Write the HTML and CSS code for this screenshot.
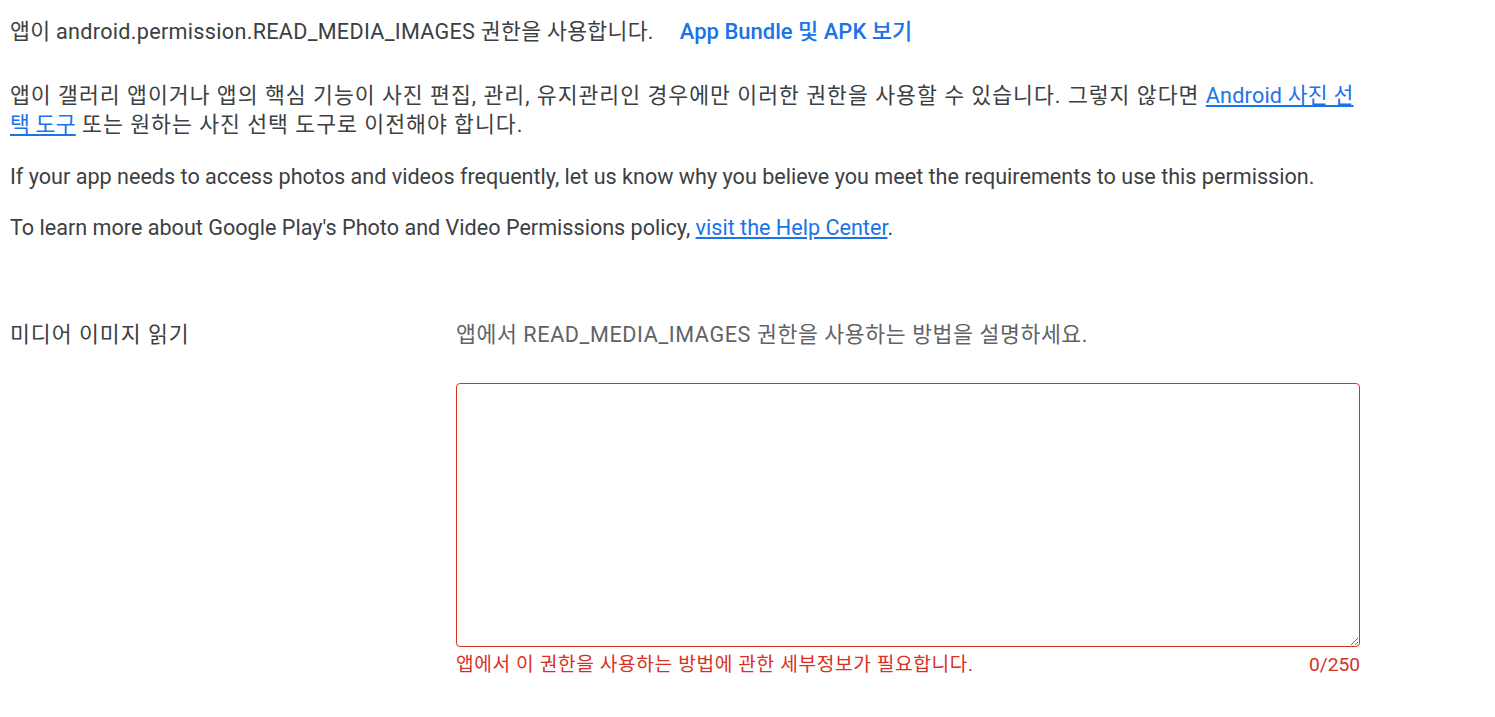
FILE: index.html
```html
<!DOCTYPE html>
<html lang="ko">
<head>
    <meta charset="UTF-8">
    <meta name="viewport" content="width=device-width, initial-scale=1.0">
    <title>권한 선언</title>
    <link rel="stylesheet" href="styles.css">
</head>
<body>
    <div class="page">
        <div class="header-row">
            <span class="permission-name">앱이 android.permission.READ_MEDIA_IMAGES 권한을 사용합니다.</span>
            <a class="bundle-link" href="#">App Bundle 및 APK 보기</a>
        </div>

        <p class="text text-first ko-wide">앱이 갤러리 앱이거나 앱의 핵심 기능이 사진 편집, 관리, 유지관리인 경우에만 이러한 권한을 사용할 수 있습니다. 그렇지 않다면 <a class="picker-link" href="#">Android 사진 선택 도구</a> 또는 원하는 사진 선택 도구로 이전해야 합니다.</p>
        <p class="text">If your app needs to access photos and videos frequently, let us know why you believe you meet the requirements to use this permission.</p>
        <p class="text">To learn more about Google Play's Photo and Video Permissions policy, <a href="#">visit the Help Center</a>.</p>

        <div class="field-row">
            <div class="field-label ko-wide">미디어 이미지 읽기</div>
            <div class="field-body">
                <div class="field-hint ko">앱에서 READ_MEDIA_IMAGES 권한을 사용하는 방법을 설명하세요.</div>
                <textarea class="field-input" maxlength="250"></textarea>
                <div class="field-footer">
                    <span class="field-error ko">앱에서 이 권한을 사용하는 방법에 관한 세부정보가 필요합니다.</span>
                    <span class="field-count">0/250</span>
                </div>
            </div>
        </div>
    </div>
</body>
</html>
```

FILE: styles.css
```css
/* Global Style */
body {
    margin: 0;
    padding: 0;
    background-color: #fff;
    color: #3c4043;
    font-family: 'Roboto', 'Noto Sans CJK KR', sans-serif;
    font-size: 21.6px;
    line-height: 29px;
}

.page {
    width: 1350px;
    padding: 17px 0 0 10px;
}

a {
    color: #1a73e8;
}

/* Korean glyphs in the original are a little wider */
.ko {
    letter-spacing: 0.6px;
}

.ko-wide {
    letter-spacing: 1px;
}

.header-row {
    display: flex;
    align-items: baseline;
    gap: 26px;
}

.permission-name {
    letter-spacing: 0.3px;
}

.bundle-link {
    font-size: 22px;
    font-weight: 500;
    text-decoration: none;
}

.picker-link {
    letter-spacing: 0.2px;
}

.text {
    margin: 22.5px 0 0;
}

.text-first {
    margin-top: 35px;
}

.field-row {
    display: flex;
    margin-top: 78px;
}

.field-label {
    width: 446px;
    flex-shrink: 0;
}

.field-body {
    flex: 1;
    display: flex;
    flex-direction: column;
}

.field-hint {
    color: #5f6368;
}

.field-input {
    margin-top: 34px;
    height: 264px;
    box-sizing: border-box;
    border: 1px solid #d93025;
    border-radius: 4px;
    outline: none;
    padding: 12px;
    font: inherit;
    resize: vertical;
}

.field-footer {
    display: flex;
    justify-content: space-between;
    color: #d93025;
    font-size: 19.2px;
    line-height: 24px;
    margin-top: 6px;
}
```
